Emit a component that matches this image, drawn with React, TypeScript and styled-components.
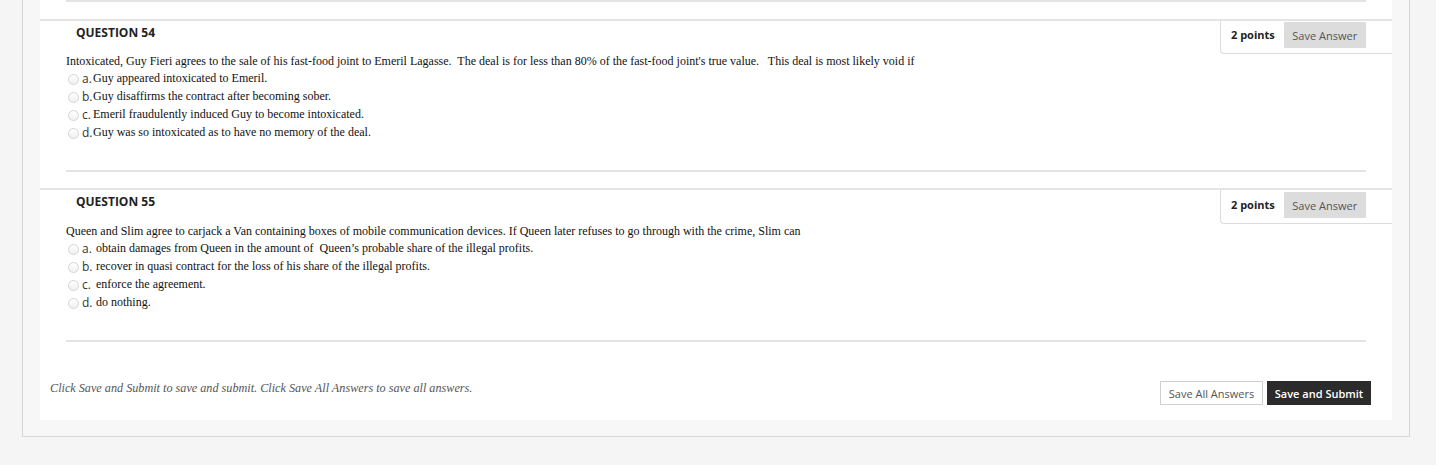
import React from "react";
import styled, { createGlobalStyle } from "styled-components";

const Global = createGlobalStyle`
  html, body { margin: 0; padding: 0; background: #f5f5f5; }
  body { font-family: "Open Sans", "Liberation Sans", sans-serif; color: #222; }
  * { box-sizing: border-box; }
`;

const Outer = styled.div`
  margin-left: 22px;
  width: 1388px;
  border: 1px solid #d6d6d6;
  border-top: none;
  background: #f7f7f7;
  padding: 0 17px 16px 17px;
`;

const Panel = styled.div`
  background: #fff;
  padding-bottom: 15px;
`;

const Separator = styled.div<{ $top?: number; $bottom?: number }>`
  height: 2px;
  background: #e3e3e3;
  margin: ${(p) => p.$top ?? 0}px 26px ${(p) => p.$bottom ?? 0}px 26px;
`;

const Block = styled.section`
  border-top: 2px solid #e4e4e4;
`;

const Header = styled.div`
  display: flex;
  justify-content: space-between;
  align-items: flex-start;
`;

const Title = styled.h3`
  margin: 0;
  padding: 3px 0 0 36px;
  font-family: "Open Sans", sans-serif;
  font-size: 12px;
  font-weight: 700;
  line-height: 18px;
  color: #222;
`;

const Points = styled.div<{ $pad: number }>`
  width: 172px;
  height: ${(p) => 32 + p.$pad}px;
  margin-bottom: -7px;
  border-left: 1px solid #dcdcdc;
  border-bottom: 1px solid #dcdcdc;
  border-bottom-left-radius: 4px;
  display: flex;
  align-items: flex-start;
  padding: ${(p) => p.$pad}px 0 0 10px;
  gap: 9px;
  background: #fff;
`;

const PointsLabel = styled.span`
  font-size: 11px;
  font-weight: 700;
  line-height: 26px;
  color: #222;
`;

const SaveAnswer = styled.button`
  width: 82px;
  height: 26px;
  border: none;
  background: #dcdcdc;
  color: #555;
  font-family: "Open Sans", sans-serif;
  font-size: 11px;
  padding: 0;
`;

const Body = styled.div`
  padding: 6px 26px 0 26px;
`;

const Prompt = styled.p`
  margin: 0;
  font-family: "Liberation Serif", "Times New Roman", serif;
  font-size: 12px;
  line-height: 16px;
  color: #111;
  white-space: pre;
`;

const OptionRow = styled.div`
  display: flex;
  align-items: center;
  height: 18px;
  padding-left: 2px;
`;

const Radio = styled.span`
  width: 11px;
  height: 11px;
  border-radius: 50%;
  border: 1px solid #d4d4d4;
  background: linear-gradient(#fff, #f0f0f0);
  margin-top: 2px;
  margin-right: 3px;
  flex: none;
`;

const Letter = styled.span<{ $w: number }>`
  font-family: "Open Sans", sans-serif;
  font-size: 12px;
  color: #333;
  width: ${(p) => p.$w}px;
  flex: none;
`;

const OptionText = styled.span`
  font-family: "Liberation Serif", "Times New Roman", serif;
  font-size: 12px;
  color: #111;
  white-space: pre;
`;

const Footer = styled.div`
  margin-top: 39px;
  display: flex;
  align-items: flex-start;
  justify-content: space-between;
  padding: 0 21px 0 10px;
  height: 24px;
`;

const Note = styled.span`
  font-family: "Liberation Serif", Georgia, serif;
  font-style: italic;
  font-size: 12.2px;
  line-height: 15px;
  color: #555;
`;

const Buttons = styled.div`
  display: flex;
  gap: 4px;
`;

const FooterButton = styled.button<{ $dark?: boolean }>`
  height: 24px;
  width: ${(p) => (p.$dark ? 104 : 103)}px;
  padding: 0;
  font-family: "Open Sans", sans-serif;
  font-size: 11px;
  border: 1px solid ${(p) => (p.$dark ? "#2b2b2b" : "#cfcfcf")};
  background: ${(p) => (p.$dark ? "#2b2b2b" : "#fff")};
  color: ${(p) => (p.$dark ? "#fff" : "#555")};
  font-weight: ${(p) => (p.$dark ? 600 : 400)};
`;

type Q = { num: number; prompt: string; options: string[]; letterW: number; pad: number };

const questions: Q[] = [
  {
    num: 54,
    prompt:
      "Intoxicated, Guy Fieri agrees to the sale of his fast-food joint to Emeril Lagasse.  The deal is for less than 80% of the fast-food joint's true value.   This deal is most likely void if",
    options: [
      "Guy appeared intoxicated to Emeril.",
      "Guy disaffirms the contract after becoming sober.",
      "Emeril fraudulently induced Guy to become intoxicated.",
      "Guy was so intoxicated as to have no memory of the deal.",
    ],
    letterW: 11,
    pad: 1,
  },
  {
    num: 55,
    prompt:
      "Queen and Slim agree to carjack a Van containing boxes of mobile communication devices. If Queen later refuses to go through with the crime, Slim can",
    options: [
      "obtain damages from Queen in the amount of  Queen\u2019s probable share of the illegal profits.",
      "recover in quasi contract for the loss of his share of the illegal profits.",
      "enforce the agreement.",
      "do nothing.",
    ],
    letterW: 14,
    pad: 2,
  },
];

const letters = ["a.", "b.", "c.", "d."];

export default function App() {
  return (
    <>
      <Global />
      <Outer>
        <Panel>
          <Separator $top={0} $bottom={17} />
          {questions.map((q, i) => (
            <Block key={q.num}>
              <Header>
                <Title>QUESTION {q.num}</Title>
                <Points $pad={q.pad}>
                  <PointsLabel>2 points</PointsLabel>
                  <SaveAnswer>Save Answer</SaveAnswer>
                </Points>
              </Header>
              <Body>
                <Prompt>{q.prompt}</Prompt>
                {q.options.map((o, j) => (
                  <OptionRow key={j}>
                    <Radio />
                    <Letter $w={q.letterW}>{letters[j]}</Letter>
                    <OptionText>{o}</OptionText>
                  </OptionRow>
                ))}
              </Body>
              <Separator $top={29} $bottom={i < questions.length - 1 ? 16 : 0} />
            </Block>
          ))}
          <Footer>
            <Note>Click Save and Submit to save and submit. Click Save All Answers to save all answers.</Note>
            <Buttons>
              <FooterButton>Save All Answers</FooterButton>
              <FooterButton $dark>Save and Submit</FooterButton>
            </Buttons>
          </Footer>
        </Panel>
      </Outer>
    </>
  );
}
